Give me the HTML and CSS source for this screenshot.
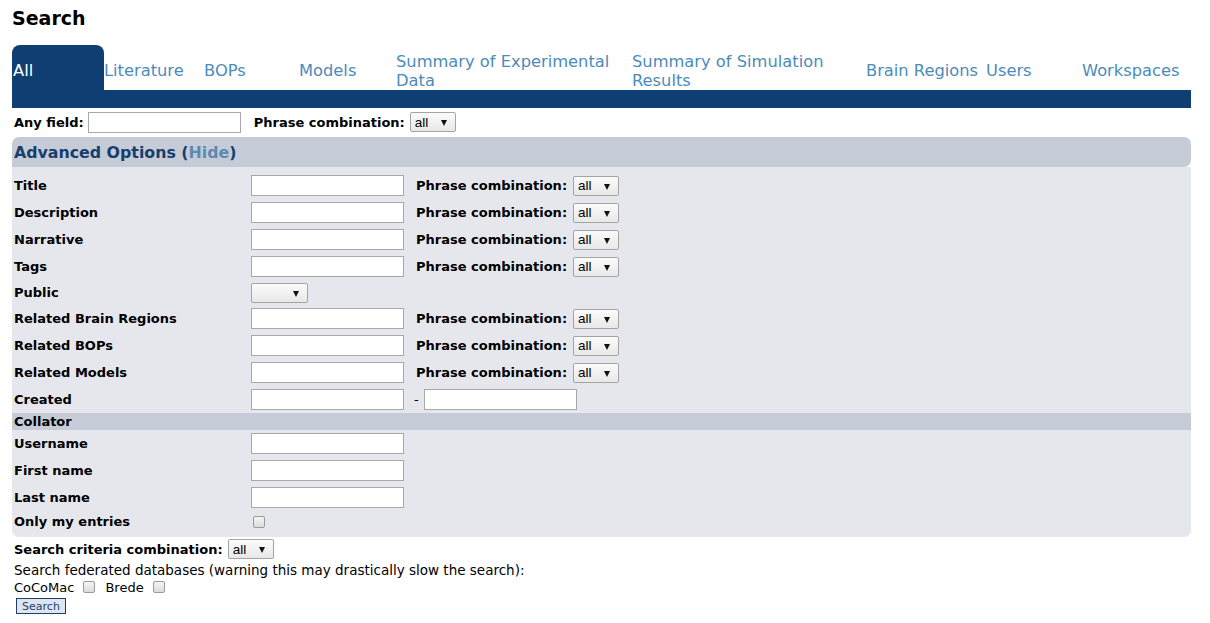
FILE: index.html
```html
<!DOCTYPE html>
<html>
<head>
<meta charset="utf-8">
<title>Search</title>
<link rel="stylesheet" href="styles.css">
</head>
<body>
<div class="page">
  <h1 class="title">Search</h1>
  <div class="tabs">
    <div class="tab active t-all">All</div>
    <div class="tab">Literature</div>
    <div class="tab">BOPs</div>
    <div class="tab">Models</div>
    <div class="tab">Summary of Experimental Data</div>
    <div class="tab">Summary of Simulation Results</div>
    <div class="tab">Brain Regions</div>
    <div class="tab">Users</div>
    <div class="tab">Workspaces</div>
  </div>
  <div class="tabbar"></div>

  <div class="anyrow">
    <span class="lbl">Any field:</span>
    <input class="txt" type="text">
    <span class="lbl pc">Phrase combination:</span>
    <span class="sel"><span class="val">all</span></span>
  </div>

  <div class="adv-head">Advanced Options (<span class="hide">Hide</span>)</div>
  <div class="adv-box">
    <div class="row"><span class="lbl rl">Title</span><input class="txt" type="text"><span class="lbl pc">Phrase combination:</span><span class="sel"><span class="val">all</span></span></div>
    <div class="row"><span class="lbl rl">Description</span><input class="txt" type="text"><span class="lbl pc">Phrase combination:</span><span class="sel"><span class="val">all</span></span></div>
    <div class="row"><span class="lbl rl">Narrative</span><input class="txt" type="text"><span class="lbl pc">Phrase combination:</span><span class="sel"><span class="val">all</span></span></div>
    <div class="row"><span class="lbl rl">Tags</span><input class="txt" type="text"><span class="lbl pc">Phrase combination:</span><span class="sel"><span class="val">all</span></span></div>
    <div class="row short"><span class="lbl rl">Public</span><span class="sel wide"><span class="val"></span></span></div>
    <div class="row"><span class="lbl rl">Related Brain Regions</span><input class="txt" type="text"><span class="lbl pc">Phrase combination:</span><span class="sel"><span class="val">all</span></span></div>
    <div class="row"><span class="lbl rl">Related BOPs</span><input class="txt" type="text"><span class="lbl pc">Phrase combination:</span><span class="sel"><span class="val">all</span></span></div>
    <div class="row"><span class="lbl rl">Related Models</span><input class="txt" type="text"><span class="lbl pc">Phrase combination:</span><span class="sel"><span class="val">all</span></span></div>
    <div class="row"><span class="lbl rl">Created</span><input class="txt" type="text"><span class="dash">-</span><input class="txt" type="text"></div>
    <div class="collator">Collator</div>
    <div class="row"><span class="lbl rl">Username</span><input class="txt" type="text"></div>
    <div class="row"><span class="lbl rl">First name</span><input class="txt" type="text"></div>
    <div class="row"><span class="lbl rl">Last name</span><input class="txt" type="text"></div>
    <div class="row mini"><span class="lbl rl">Only my entries</span><span class="cb"></span></div>
  </div>

  <div class="critrow"><span class="lbl">Search criteria combination:</span><span class="sel"><span class="val">all</span></span></div>
  <div class="plain warn">Search federated databases (warning this may drastically slow the search):</div>
  <div class="plain fed"><span>CoCoMac</span><span class="cb"></span><span>Brede</span><span class="cb"></span></div>
  <button class="btn" type="button">Search</button>
</div>
</body>
</html>
```

FILE: styles.css
```css
* { box-sizing: border-box; }
html, body { margin: 0; padding: 0; background: #fff; }
body { font-family: "DejaVu Sans", Verdana, sans-serif; color: #000; }
.page { padding: 6px 19px 0 12px; }

.title { margin: 0; font-size: 19px; font-weight: bold; line-height: 24px; height: 39px; }

.tabs {
  display: grid;
  grid-template-columns: 92px 100px 95px 97px 236px 234px 120px 96px 109px;
  height: 45px;
}
.tab {
  display: flex; align-items: center;
  padding-top: 6px;
  font-size: 16.3px; line-height: 19px;
  color: #4d8bba;
}
.tab.active { background: #0f3f72; color: #fff; border-radius: 8px 8px 0 0; padding-left: 1px; }
.tabbar { height: 18px; background: #0f3f72; }

.lbl { font-weight: bold; font-size: 13px; }
.txt {
  width: 153px; height: 21px; margin: 0;
  border: 1px solid #a8a8a8; background: #fff; padding: 0 2px;
  font: 13px "DejaVu Sans", sans-serif;
}
.sel {
  position: relative; display: inline-flex; align-items: center;
  width: 46px; height: 20px;
  border: 1px solid #a4a4a4; border-radius: 2px;
  background: linear-gradient(#fbfbfb, #e8e8e8);
  font: 13.5px "Liberation Sans", Arial, sans-serif; color: #000;
  padding-left: 4px;
}
.sel::after {
  content: ""; position: absolute; right: 8px; top: 7px;
  border-left: 3.5px solid transparent; border-right: 3.5px solid transparent;
  border-top: 6px solid #111;
}
.sel.wide { width: 57px; height: 20px; }

.anyrow { display: flex; align-items: center; height: 29px; padding-left: 2px; padding-bottom: 1px; }
.anyrow .txt { margin-left: 4px; }
.anyrow .pc { margin-left: 13px; margin-right: 5px; }

.adv-head {
  height: 30px; background: #c5ccd7; border-radius: 7px;
  border-bottom-left-radius: 0;
  font-size: 15.8px; font-weight: bold; color: #173e6d;
  display: flex; align-items: center; padding-left: 2px;
}
.hide { color: #5b8bb3; }
.adv-box {
  background: #e6e7ec; border-radius: 0 0 7px 7px;
  padding: 5px 0 5px 0;
}
.row { display: flex; align-items: center; height: 27px; padding-left: 2px; }
.row.short { height: 25px; }
.row.mini { height: 21px; }
.rl { width: 237px; flex: none; }
.row .pc { margin-left: 12px; margin-right: 6px; }
.dash { font-size: 13px; margin: 0 5px 0 10px; }
.collator {
  background: #c5ccd7; height: 17px; font-weight: bold; font-size: 13px;
  padding-left: 2px; display: flex; align-items: center;
}
.cb {
  display: inline-block; width: 12px; height: 12px;
  border: 1px solid #9a9a9a; border-radius: 2px;
  background: linear-gradient(#f4f4f4, #dcdcdc);
}
.row.mini .cb { margin-left: 2px; }

.critrow { display: flex; align-items: center; height: 24px; padding-left: 2px; }
.critrow .sel { margin-left: 5px; }
.plain { font-size: 13px; padding-left: 2px; height: 18px; display: flex; align-items: center; }
.plain.warn { font-size: 13.5px; }
.plain.fed { height: 16px; }
.fed .cb { margin: 0 10px 0 9px; }
.fed .cb:last-child { margin-right: 0; }
.btn {
  display: block;
  margin: 3px 0 0 4px; height: 16px; width: 50px; padding: 0;
  border: 1px solid #1c3f6e; background: #dfe5ee; color: #1c3f6e;
  font: 11px "DejaVu Sans", sans-serif; line-height: 13px;
}
```
